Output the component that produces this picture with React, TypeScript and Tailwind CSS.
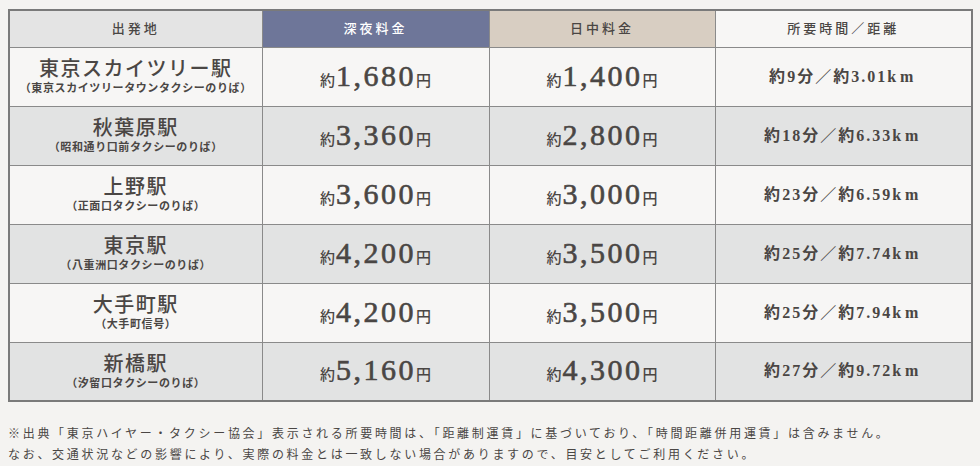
const rows = [
  { name: '東京スカイツリー駅', sub: '（東京スカイツリータウンタクシーのりば）', night: '1,680', day: '1,400', min: '9', km: '3.01' },
  { name: '秋葉原駅', sub: '（昭和通り口前タクシーのりば）', night: '3,360', day: '2,800', min: '18', km: '6.33' },
  { name: '上野駅', sub: '（正面口タクシーのりば）', night: '3,600', day: '3,000', min: '23', km: '6.59' },
  { name: '東京駅', sub: '（八重洲口タクシーのりば）', night: '4,200', day: '3,500', min: '25', km: '7.74' },
  { name: '大手町駅', sub: '（大手町信号）', night: '4,200', day: '3,500', min: '25', km: '7.94' },
  { name: '新橋駅', sub: '（汐留口タクシーのりば）', night: '5,160', day: '4,300', min: '27', km: '9.72' },
]

const font = "font-['Liberation_Serif','Noto_Sans_CJK_JP',serif]"

const Price = ({ value }: { value: string }) => (
  <span className="inline-flex items-baseline">
    <span className="text-[15px] font-medium">約</span>
    <span className="text-[30px] tracking-[2.5px] leading-none ml-[1px] [-webkit-text-stroke:0.6px_#4a4644]">{value}</span>
    <span className="text-[15px] font-medium">円</span>
  </span>
)

export default function App() {
  return (
    <div className={`w-[980px] h-[466px] bg-[#f4f3f1] text-[#4a4644] pt-[9px] pl-[8px] ${font}`}>
      <table className="border-collapse border-2 border-[#7a7a7a] w-[963px] table-fixed">
        <colgroup>
          <col className="w-[253px]" />
          <col className="w-[227px]" />
          <col className="w-[226px]" />
          <col className="w-[257px]" />
        </colgroup>
        <thead>
          <tr className="h-[37px] text-[13px] tracking-[3px]">
            <th className="border border-[#8a8a8a] bg-[#e4e4e4] font-medium">出発地</th>
            <th className="border border-[#8a8a8a] bg-[#6e7699] text-white font-medium">深夜料金</th>
            <th className="border border-[#8a8a8a] bg-[#d8cec2] font-medium">日中料金</th>
            <th className="border border-[#8a8a8a] bg-[#f7f6f5] font-medium">所要時間／距離</th>
          </tr>
        </thead>
        <tbody>
          {rows.map((r, i) => (
            <tr key={r.name} className={`h-[59px] text-center ${i % 2 ? 'bg-[#e2e3e3]' : 'bg-[#f7f6f5]'}`}>
              <td className="border border-[#8a8a8a]">
                <div className="text-[20px] font-medium tracking-[1.5px] leading-[24px]">{r.name}</div>
                <div className="text-[11px] font-bold tracking-[0.6px] leading-[15px]">{r.sub}</div>
              </td>
              <td className="border border-[#8a8a8a]"><Price value={r.night} /></td>
              <td className="border border-[#8a8a8a]"><Price value={r.day} /></td>
              <td className="border border-[#8a8a8a] text-[16px] font-bold tracking-[2px]">
                約{r.min}分／約{r.km}<span className="tracking-[4px]">km</span>
              </td>
            </tr>
          ))}
        </tbody>
      </table>
      <div className="mt-[22px] text-[12px] leading-[21px] tracking-[2.7px]">
        <p>※出典「東京ハイヤー・タクシー協会」表示される所要時間は、「距離制運賃」に基づいており、「時間距離併用運賃」は含みません。</p>
        <p>なお、交通状況などの影響により、実際の料金とは一致しない場合がありますので、目安としてご利用ください。</p>
      </div>
    </div>
  )
}
